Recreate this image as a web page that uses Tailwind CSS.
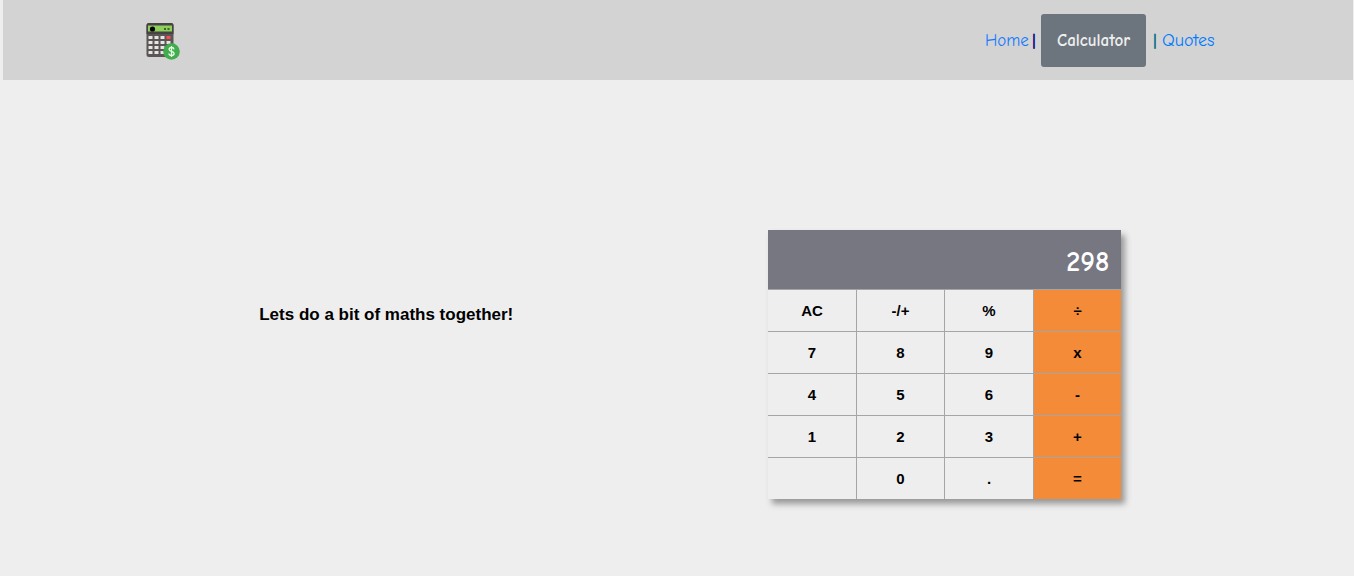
<!DOCTYPE html>
<html lang="en">
<head>
<meta charset="utf-8">
<meta name="viewport" content="width=device-width, initial-scale=1">
<title>Calculator</title>
<script src="https://cdn.jsdelivr.net/npm/@tailwindcss/browser@4"></script>
</head>
<body class="min-h-screen bg-[#eee] pl-[3px] pr-px font-['Liberation_Sans',sans-serif] text-black">
<header class="flex h-20 items-center justify-between bg-[#d3d3d3] pl-[143px] pr-[136px]">
  <svg class="h-10 w-9" viewBox="0 0 36 40" role="img" aria-label="Calculator logo">
    <rect x="0.5" y="3" width="27" height="34" rx="2.5" fill="#5b5555"/>
    <path d="M3 3h22a2.500 2.500 0 0 1 2.500 2.500V14H.5V5.500A2.500 2.500 0 0 1 3 3z" fill="#474243"/>
    <rect x="2" y="5.500" width="24" height="6" fill="#8fcf5b"/>
    <circle cx="6.500" cy="9" r="2.600" fill="#000"/>
    <path d="M18 8h2v2h-2zM21.500 8h2v2h-2z" fill="#366b2c"/>
    <path d="M2.500 16h4v3h-4zM8.500 16h4v3h-4zM14.500 16h4v3h-4zM2.500 21h4v3h-4zM8.500 21h4v3h-4zM14.500 21h4v3h-4zM20.500 21h4v3h-4zM2.500 26h4v3h-4zM8.500 26h4v3h-4zM14.500 26h4v3h-4zM2.500 31h4v3h-4zM8.500 31h4v3h-4zM14.500 31h4v3h-4z" fill="#e6e4e4"/>
    <rect x="20.500" y="16" width="4" height="3" fill="#ff4b50"/>
    <circle cx="25.500" cy="31.500" r="8.300" fill="#42ad4c"/>
    <path d="M28 29.300c-.2-1.200-1.200-1.800-2.500-1.800s-2.400.7-2.400 1.900c0 2.700 5 1.300 5 4.100 0 1.300-1.100 2-2.600 2s-2.500-.7-2.700-2M25.500 26v11" fill="none" stroke="#e5ffe6" stroke-width="1.300"/>
  </svg>
  <nav class="flex items-center font-['Comic_Sans_MS','Comic_Neue','Open_Sans',sans-serif] text-[17px] leading-6">
    <a href="#home" class="w-[46px] whitespace-nowrap pt-0.5 text-[#147bff]">Home</a>
    <span class="flex w-1.5 justify-center pt-0.5 text-base font-bold text-[#000080]">|</span>
    <a href="#calculator" class="ml-1 mr-1.5 flex h-[53px] w-[105px] items-center justify-center rounded-[3px] bg-[#6c757d] pt-0.5 font-bold text-[#eee]">Calculator</a>
    <span class="mr-1 flex w-1.5 justify-center pt-0.5 text-base font-bold text-[#006b80]">|</span>
    <a href="#quotes" class="w-[55px] whitespace-nowrap pt-0.5 text-lg leading-6 text-[#007bff]">Quotes</a>
  </nav>
</header>
<main class="grid grid-cols-2 pl-[104px] pr-[129px] pt-[150px]">
  <h1 class="pt-[73px] text-center text-[17px] leading-6 font-bold">Lets do a bit of maths together!</h1>
  <section class="mx-auto w-full max-w-[353px] shadow-[4px_5px_6px_#999]" aria-label="Calculator">
    <output class="flex h-[59px] items-center justify-end bg-[#777781] pr-3 pt-1 font-['Comic_Sans_MS','Comic_Neue','Open_Sans',sans-serif] text-[28px] font-bold leading-8 text-white">298</output>
    <div class="grid auto-rows-[41px] grid-cols-4 gap-px bg-[#a5a5a5] pt-px text-[15px] font-bold [&>button]:bg-[#eee] [&>button]:pt-px [&>button:nth-child(4n)]:bg-[#f38b38]">
      <button type="button">AC</button><button type="button">-/+</button><button type="button">%</button><button type="button">÷</button>
      <button type="button">7</button><button type="button">8</button><button type="button">9</button><button type="button">x</button>
      <button type="button">4</button><button type="button">5</button><button type="button">6</button><button type="button">-</button>
      <button type="button">1</button><button type="button">2</button><button type="button">3</button><button type="button">+</button>
      <button type="button" aria-label="Blank"></button><button type="button">0</button><button type="button">.</button><button type="button">=</button>
    </div>
  </section>
</main>
</body>
</html>
